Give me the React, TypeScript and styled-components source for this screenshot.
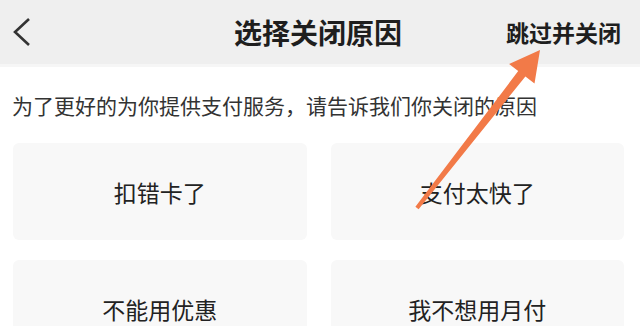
import React from 'react';
import styled, { createGlobalStyle } from 'styled-components';

const GlobalStyle = createGlobalStyle`
    html, body {
        margin: 0;
        padding: 0;
        background: #ffffff;
    }
    body {
        font-family: "Noto Sans CJK SC", "Noto Sans", sans-serif;
        color: #222222;
    }
`;

const Screen = styled.div`
    position: relative;
    width: 640px;
    height: 326px;
    overflow: hidden;
    background: #ffffff;
`;

const NavBar = styled.div`
    display: grid;
    grid-template-columns: 1fr auto 1fr;
    align-items: center;
    height: 64px;
    background: #efefef;
    border-bottom: 3px solid #f6f6f6;
    box-sizing: content-box;
`;

const BackButton = styled.div`
    display: flex;
    align-items: center;
    padding-left: 12px;
    height: 100%;
`;

const Title = styled.div`
    font-size: 28px;
    font-weight: 700;
    color: #1e1e1e;
    margin-right: 4px;
`;

const SkipLink = styled.div`
    justify-self: end;
    padding-right: 19px;
    font-size: 23px;
    font-weight: 700;
    color: #1e1e1e;
`;

const Hint = styled.div`
    padding: 26px 12px 0;
    font-size: 21px;
    line-height: 25px;
    color: #333333;
`;

const ReasonGrid = styled.div`
    display: grid;
    grid-template-columns: 1fr 1fr;
    grid-auto-rows: 97px;
    column-gap: 24px;
    row-gap: 20px;
    padding: 25px 16px 0 13px;
`;

const ReasonCard = styled.div`
    display: flex;
    align-items: center;
    justify-content: center;
    background: #f8f8f8;
    border-radius: 6px;
    font-size: 23px;
    color: #222222;
`;

const ArrowLayer = styled.svg`
    position: absolute;
    left: 0;
    top: 0;
    pointer-events: none;
`;

const reasons = ['扣错卡了', '支付太快了', '不能用优惠', '我不想用月付'];

const App = () => {
    return (
        <Screen>
            <GlobalStyle />
            <NavBar>
                <BackButton>
                    <svg width="20" height="30" viewBox="0 0 20 30">
                        <polyline points="17,2 3,15 17,28" fill="none" stroke="#333" strokeWidth="2.6" />
                    </svg>
                </BackButton>
                <Title>选择关闭原因</Title>
                <SkipLink>跳过并关闭</SkipLink>
            </NavBar>
            <Hint>为了更好的为你提供支付服务，请告诉我们你关闭的原因</Hint>
            <ReasonGrid>
                {reasons.map(r => (
                    <ReasonCard key={r}>{r}</ReasonCard>
                ))}
            </ReasonGrid>
            {/* annotation arrow pointing at the skip link */}
            <ArrowLayer width="640" height="326" viewBox="0 0 640 326">
                <polygon
                    points="415.4,206.8 518.2,71.1 509.1,64.1 540,50 534.5,83.5 525.4,76.5 418.6,209.2"
                    fill="#f27a48"
                    strokeLinejoin="round"
                />
            </ArrowLayer>
        </Screen>
    );
};

export default App;
